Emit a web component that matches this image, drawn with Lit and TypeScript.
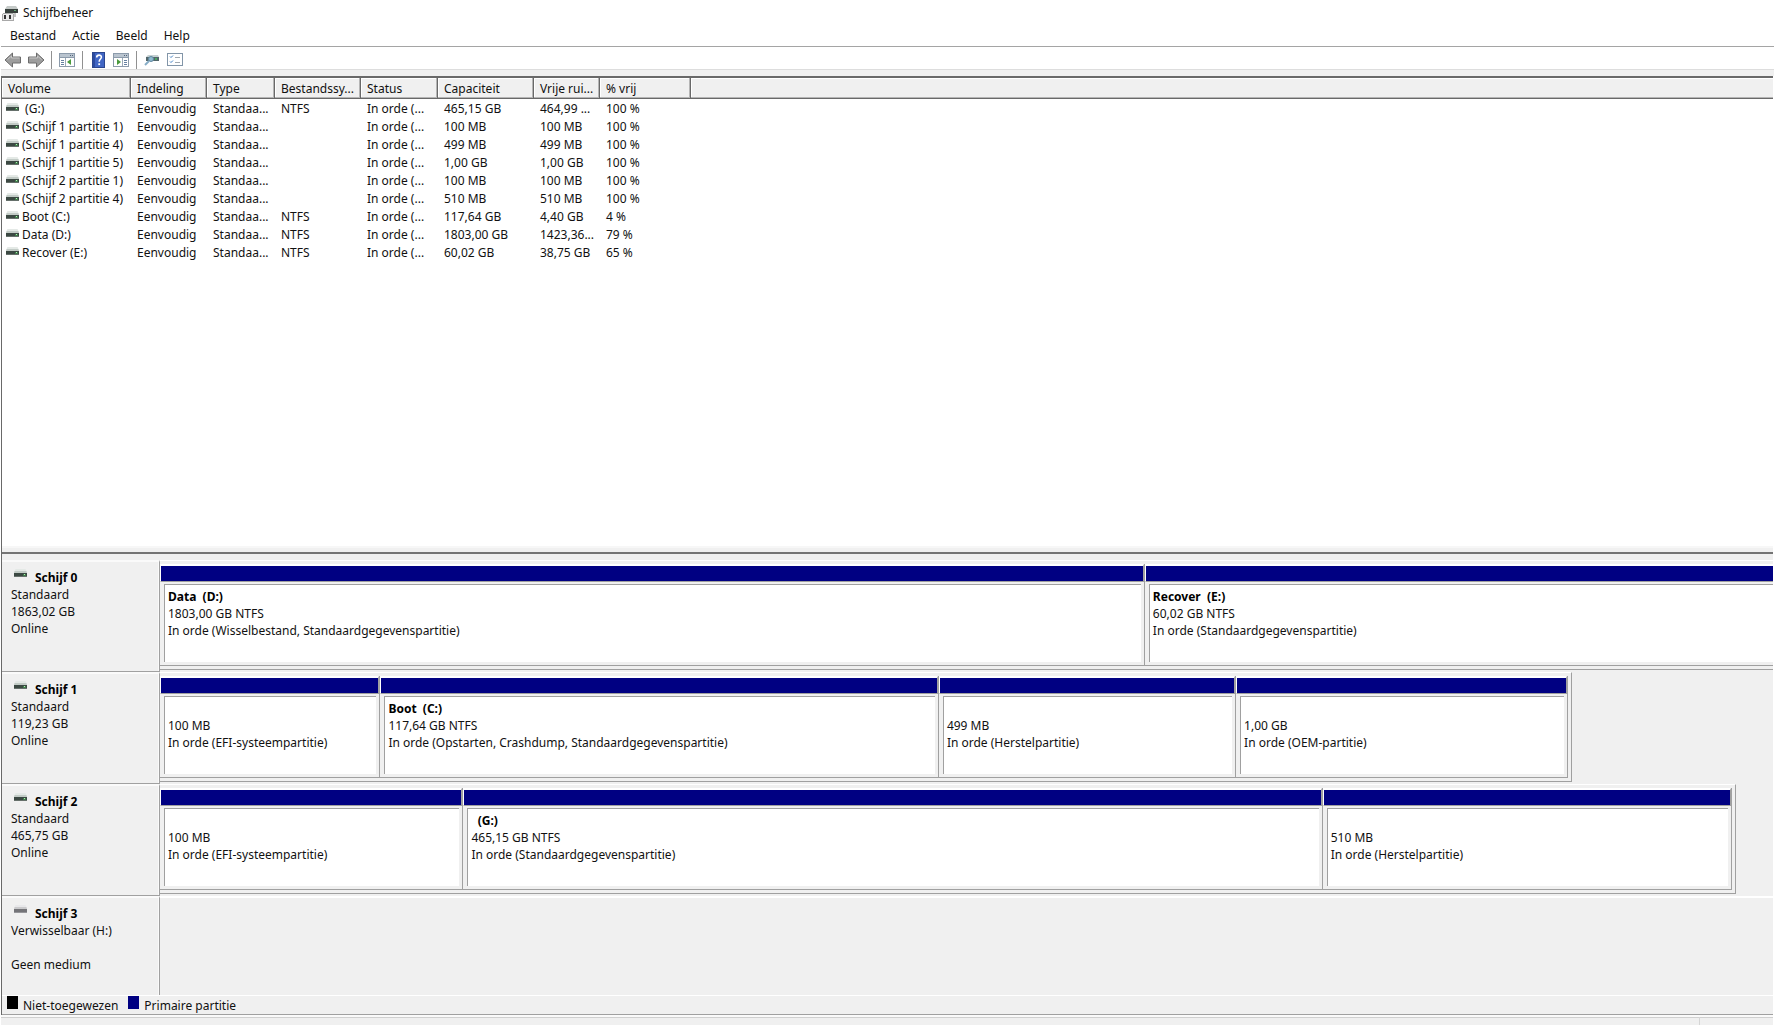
import { LitElement, html, svg, css, nothing } from "lit";
import { customElement } from "lit/decorators.js";

interface Volume {
  name: string;
  fs: string;
  capacity: string;
  free: string;
  percent: string;
}

interface Partition {
  title: string;
  size: string;
  status: string;
  weight: number;
}

interface Disk {
  name: string;
  kind: string;
  size: string;
  state: string;
  extent: number;
  partitions: Partition[];
}

const VOLUMES: Volume[] = [
  { name: " (G:)", fs: "NTFS", capacity: "465,15 GB", free: "464,99 ...", percent: "100 %" },
  { name: "(Schijf 1 partitie 1)", fs: "", capacity: "100 MB", free: "100 MB", percent: "100 %" },
  { name: "(Schijf 1 partitie 4)", fs: "", capacity: "499 MB", free: "499 MB", percent: "100 %" },
  { name: "(Schijf 1 partitie 5)", fs: "", capacity: "1,00 GB", free: "1,00 GB", percent: "100 %" },
  { name: "(Schijf 2 partitie 1)", fs: "", capacity: "100 MB", free: "100 MB", percent: "100 %" },
  { name: "(Schijf 2 partitie 4)", fs: "", capacity: "510 MB", free: "510 MB", percent: "100 %" },
  { name: "Boot (C:)", fs: "NTFS", capacity: "117,64 GB", free: "4,40 GB", percent: "4 %" },
  { name: "Data (D:)", fs: "NTFS", capacity: "1803,00 GB", free: "1423,36...", percent: "79 %" },
  { name: "Recover (E:)", fs: "NTFS", capacity: "60,02 GB", free: "38,75 GB", percent: "65 %" },
];

const COLUMNS = ["Volume", "Indeling", "Type", "Bestandssy...", "Status", "Capaciteit", "Vrije rui...", "% vrij"];

const DISKS: Disk[] = [
  {
    name: "Schijf 0", kind: "Standaard", size: "1863,02 GB", state: "Online", extent: 101,
    partitions: [
      { title: "Data  (D:)", size: "1803,00 GB NTFS", status: "In orde (Wisselbestand, Standaardgegevenspartitie)", weight: 985 },
      { title: "Recover  (E:)", size: "60,02 GB NTFS", status: "In orde (Standaardgegevenspartitie)", weight: 640 },
    ],
  },
  {
    name: "Schijf 1", kind: "Standaard", size: "119,23 GB", state: "Online", extent: 87.55,
    partitions: [
      { title: "", size: "100 MB", status: "In orde (EFI-systeempartitie)", weight: 220 },
      { title: "Boot  (C:)", size: "117,64 GB NTFS", status: "In orde (Opstarten, Crashdump, Standaardgegevenspartitie)", weight: 559 },
      { title: "", size: "499 MB", status: "In orde (Herstelpartitie)", weight: 297 },
      { title: "", size: "1,00 GB", status: "In orde (OEM-partitie)", weight: 332 },
    ],
  },
  {
    name: "Schijf 2", kind: "Standaard", size: "465,75 GB", state: "Online", extent: 97.7,
    partitions: [
      { title: "", size: "100 MB", status: "In orde (EFI-systeempartitie)", weight: 303 },
      { title: "  (G:)", size: "465,15 GB NTFS", status: "In orde (Standaardgegevenspartitie)", weight: 860 },
      { title: "", size: "510 MB", status: "In orde (Herstelpartitie)", weight: 409 },
    ],
  },
  { name: "Schijf 3", kind: "Verwisselbaar (H:)", size: "", state: "Geen medium", extent: 0, partitions: [] },
];

const driveIcon = (online = true) => html`<svg class="drive" width="13" height="8" viewBox="0 0 13 8" aria-hidden="true">
  <path d="M1.500 0h10l1 2h-12z" fill="${online ? "#e4e9e6" : "#e8e8ea"}"/>
  <path d="M0.500 2h12l0.500 2h-13z" fill="${online ? "#c2cbc6" : "#cacacc"}"/>
  <rect y="4" width="13" height="4" fill="${online ? "#3c4943" : "#747478"}"/>
  <rect y="7" width="13" height="1" fill="${online ? "#66706b" : "#96969a"}"/>
  ${online ? svg`<rect x="9" y="5" width="3" height="2" fill="#3f7a4a"/><rect x="10" y="5" width="1" height="1" fill="#b4eeb4"/>` : nothing}
</svg>`;

const appIcon = html`<svg width="16" height="16" viewBox="0 0 16 16" aria-hidden="true">
  <path d="M5 1h9l2 3H3z" fill="#c5cac8"/>
  <rect x="3" y="4" width="13" height="4" fill="#38413d"/>
  <rect x="12" y="5" width="2" height="1" fill="#68a878"/>
  <path d="M11 8h3v4h-3z" fill="#c4c4c4"/>
  <path d="M1 8h10l1 1v6H0V9z" fill="#eaeaea"/>
  <path d="M1 8.500h10M0.500 9v6M11.500 9v6M0 15.500h12" stroke="#a8a8a8" fill="none"/>
  <rect x="2" y="10" width="2" height="4" fill="#333"/>
  <rect x="7" y="10" width="2" height="4" fill="#333"/>
</svg>`;

const arrow = (right: boolean) => html`<svg width="18" height="18" viewBox="0 0 18 18" aria-hidden="true">
  <g transform="${right ? "matrix(-1 0 0 1 18 0)" : "matrix(1 0 0 1 0 0)"}">
    <path d="M1 9L8.500 2v4h8v6h-8v4z" fill="#9d9d9d" stroke="#6c6c6c" stroke-linejoin="round"/>
    <path d="M3.500 8.500L7.500 5v2h8" fill="none" stroke="#c6c6c6"/>
  </g>
</svg>`;

const paneIcon = (right: boolean) => html`<svg width="18" height="16" viewBox="0 0 18 16" aria-hidden="true">
  <rect x="1.500" y="1.500" width="15" height="13" fill="#fff" stroke="#8c9bab"/>
  <rect x="2" y="2" width="14" height="3" fill="#b9c4cf"/>
  <path d="M2 5.500h14" stroke="#8c9bab"/>
  <path d="M12 3.500h1M14 3.500h1" stroke="#53657a"/>
  ${right
    ? svg`<path d="M10.500 6v8" stroke="#9aa9b8"/><path d="M12 8.500h3M12 10.500h3M12 12.500h3" stroke="#6680a0"/><path d="M5 7l4 3-4 3z" fill="#4a9a3c"/>`
    : svg`<path d="M7.500 6v8" stroke="#9aa9b8"/><path d="M3 8.500h3M3 10.500h3M3 12.500h3" stroke="#6680a0"/><path d="M13 7l-4 3 4 3z" fill="#4a9a3c"/>`}
</svg>`;

const helpIcon = html`<svg width="13" height="16" viewBox="0 0 13 16" aria-hidden="true">
  <rect x="0.500" y="0.500" width="12" height="15" fill="#4166c4" stroke="#2b468e"/>
  <path d="M1 1h2v14H1z" fill="#2c4ba0"/>
  <path d="M4.700 5.500C4.700 2.300 9.500 2.500 9.400 5.300C9.300 7 7.200 7.200 7.200 9.700" fill="none" stroke="#fff" stroke-width="1.600"/>
  <rect x="6.300" y="11.300" width="1.800" height="1.800" fill="#fff"/>
</svg>`;

const rescanIcon = html`<svg width="16" height="14" viewBox="0 0 16 14" aria-hidden="true">
  <path d="M4 2h10l1 2H2z" fill="#c5d0d2"/>
  <rect x="2" y="4" width="13" height="4" fill="#52666a"/>
  <rect x="11" y="5" width="2" height="2" fill="#4aa862"/>
  <circle cx="7" cy="6" r="2.500" fill="#8fb9cf" stroke="#6289a0"/>
  <path d="M5 8l-4 4" stroke="#86adc6" stroke-width="2"/>
</svg>`;

const listIcon = html`<svg width="16" height="13" viewBox="0 0 16 13" aria-hidden="true">
  <rect x="0.500" y="0.500" width="15" height="12" fill="#fff" stroke="#8295a8"/>
  <path d="M3 3.500l1 1 2-2M3 8.500l1 1 2-2" fill="none" stroke="#3f7fc4"/>
  <path d="M8 4.500h5M8 9.500h5" stroke="#a0a8b0"/>
</svg>`;

@customElement("app-root")
export class AppRoot extends LitElement {
  static styles = css`
    :host {
      display: flex;
      flex-direction: column;
      min-height: 100vh;
      box-sizing: border-box;
      padding: 0 0 1px 1px;
      overflow: hidden;
      background: #fff;
      color: #111;
      font: 12px/17px "Noto Sans", "Open Sans", sans-serif;
    }
    * { box-sizing: border-box; }
    .title { display: flex; align-items: center; gap: 5px; height: 25px; padding-left: 1px; }
    h1, h2, h3, p { margin: 0; font-size: 12px; font-weight: 400; line-height: 17px; white-space: pre; }
    h2, h3 { font-weight: 700; color: #000; }
    .menu { display: flex; gap: 16px; height: 22px; padding-left: 9px; border-bottom: 1px solid #a5a5a5; }
    button { border: 0; padding: 0; background: none; color: inherit; font: inherit; display: flex; align-items: center; }
    .menu button { height: 20px; }
    .tools { display: flex; align-items: center; gap: 7px; height: 22px; padding: 3px 0 0 4px; }
    .tools button { width: 16px; justify-content: center; }
    .tools svg { flex: none; }
    .sep { width: 1px; height: 18px; background: #919191; }
    .strip { height: 7px; background: #f0f0f0; border-top: 1px solid #ddd; }
    .frame {
      flex: 1;
      display: flex;
      flex-direction: column;
      margin-right: 1px;
      border-left: 1px solid #696969;
    }
    .list { flex: 1; border-top: 2px solid #696969; }
    table { border-collapse: separate; border-spacing: 0; table-layout: fixed; width: 100%; }
    th, td { text-align: left; font-weight: 400; white-space: pre; overflow: hidden; }
    th {
      height: 21px;
      padding: 2px 0 0 6px;
      line-height: 18px;
      background: #f0f0f0;
      border-right: 1px solid #696969;
      border-bottom: 1px solid #696969;
      box-shadow: inset -1px -1px #b5b5b5, inset 1px 1px #fff;
    }
    th:last-child { border-right: 0; box-shadow: inset 0 -1px #b5b5b5, inset 1px 1px #fff; }
    td { height: 18px; padding: 2px 0 0 6px; line-height: 16px; }
    td:first-child { padding-left: 4px; }
    .vol { display: flex; gap: 3px; }
    .vol .drive { margin-top: 2px; }
    .c1 { width: 129px; } .c2 { width: 76px; } .c3 { width: 68px; } .c4 { width: 86px; }
    .c5 { width: 77px; } .c6 { width: 96px; } .c7 { width: 66px; } .c8 { width: 91px; }
    .split { height: 8px; background: #f0f0f0; border-top: 2px solid #f7f7f7; border-bottom: 2px solid #747474; }
    .disks { background: #f0f0f0; padding-top: 6px; }
    .disk { display: flex; height: 112px; }
    .disk:last-child { height: 99px; }
    .label {
      flex: none;
      width: 158px;
      padding: 7px 0 0 9px;
      border-top: 2px solid #fafafa;
      border-right: 1px solid #a0a0a0;
      border-bottom: 1px solid #a0a0a0;
      box-shadow: inset -1px 0 #fafafa;
    }
    .disk:last-child .label { border-bottom: 0; }
    .label p { min-height: 17px; }
    .name { display: flex; gap: 8px; padding-left: 3px; }
    .track { flex: 1; min-width: 0; overflow: hidden; }
    .empty { border-top: 2px solid #fff; }
    .map {
      display: flex;
      height: 110px;
      padding: 3px 3px 3px 0;
      border-top: 1px solid #fff;
      border-right: 1px solid #a0a0a0;
      border-bottom: 1px solid #a0a0a0;
    }
    .part {
      flex: 1 1 0;
      min-width: 0;
      display: flex;
      flex-direction: column;
      border: solid #a0a0a0;
      border-width: 0 1px 1px 0;
    }
    .bar {
      height: 18px;
      background: #000082;
      border: solid #fff;
      border-width: 2px 0 0 1px;
      border-right: 1px solid #a0a0a0;
      border-bottom: 1px solid #a0a0a0;
    }
    .body {
      flex: 1;
      margin: 2px 3px 3px 4px;
      padding: 3px 0 0 3px;
      overflow: hidden;
      background: #fff;
      border: solid #a0a0a0;
      border-width: 1px 0 0 1px;
    }
    .body h3 { min-height: 17px; }
    .legend {
      display: flex;
      align-items: center;
      gap: 10px;
      height: 20px;
      padding-left: 5px;
      background: #f0f0f0;
      border-top: 1px solid #fff;
      border-bottom: 1px solid #a0a0a0;
    }
    .key { display: flex; gap: 5px; }
    .swatch { width: 11px; height: 13px; background: #000; }
    .key span:last-child { padding-top: 1px; }
    .primary { background: #000082; }
    .status { display: flex; justify-content: flex-end; height: 10px; background: #f0f0f0; border-top: 2px solid #fafafa; box-shadow: inset 0 1px #d0d0d0; margin-right: 1px; }
    .grip { width: 74px; border-left: 1px solid #d5d5d5; }
    .drive { flex: none; }
  `;

  render() {
    return html`
      <header class="title">${appIcon}<h1>Schijfbeheer</h1></header>
      <nav class="menu">${["Bestand", "Actie", "Beeld", "Help"].map((m) => html`<button>${m}</button>`)}</nav>
      <div class="tools">
        <button aria-label="Vorige">${arrow(false)}</button>
        <button aria-label="Volgende">${arrow(true)}</button>
        <span class="sep"></span>
        <button aria-label="Consolestructuur">${paneIcon(false)}</button>
        <span class="sep"></span>
        <button aria-label="Help">${helpIcon}</button>
        <button aria-label="Actievenster">${paneIcon(true)}</button>
        <span class="sep"></span>
        <button aria-label="Opnieuw scannen">${rescanIcon}</button>
        <button aria-label="Instellingen">${listIcon}</button>
      </div>
      <div class="strip"></div>
      <main class="frame">
        <section class="list">
          <table>
            <colgroup>${COLUMNS.map((_, i) => html`<col class="c${i + 1}">`)}<col></colgroup>
            <thead><tr>${COLUMNS.map((c) => html`<th scope="col">${c}</th>`)}<th></th></tr></thead>
            <tbody>${VOLUMES.map((v) => html`<tr>
              <td><span class="vol">${driveIcon()}<span>${v.name}</span></span></td>
              <td>Eenvoudig</td><td>Standaa...</td><td>${v.fs}</td><td>In orde (...</td>
              <td>${v.capacity}</td><td>${v.free}</td><td>${v.percent}</td><td></td>
            </tr>`)}</tbody>
          </table>
        </section>
        <div class="split"></div>
        <section class="disks">${DISKS.map((d) => this.disk(d))}</section>
        <footer class="legend">
          <span class="key"><span class="swatch"></span><span>Niet-toegewezen</span></span>
          <span class="key"><span class="swatch primary"></span><span>Primaire partitie</span></span>
        </footer>
      </main>
      <div class="status"><span class="grip"></span></div>
    `;
  }

  private disk(d: Disk) {
    return html`<article class="disk">
      <div class="label">
        <div class="name">${driveIcon(d.partitions.length > 0)}<h2>${d.name}</h2></div>
        <p>${d.kind}</p><p>${d.size}</p><p>${d.state}</p>
      </div>
      ${d.partitions.length
        ? html`<div class="track"><div class="map" style="width:${d.extent}%">${d.partitions.map((p) => html`
            <div class="part" style="flex-grow:${p.weight}">
              <div class="bar"></div>
              <div class="body"><h3>${p.title}</h3><p>${p.size}</p><p>${p.status}</p></div>
            </div>`)}</div></div>`
        : html`<div class="track empty"></div>`}
    </article>`;
  }
}
